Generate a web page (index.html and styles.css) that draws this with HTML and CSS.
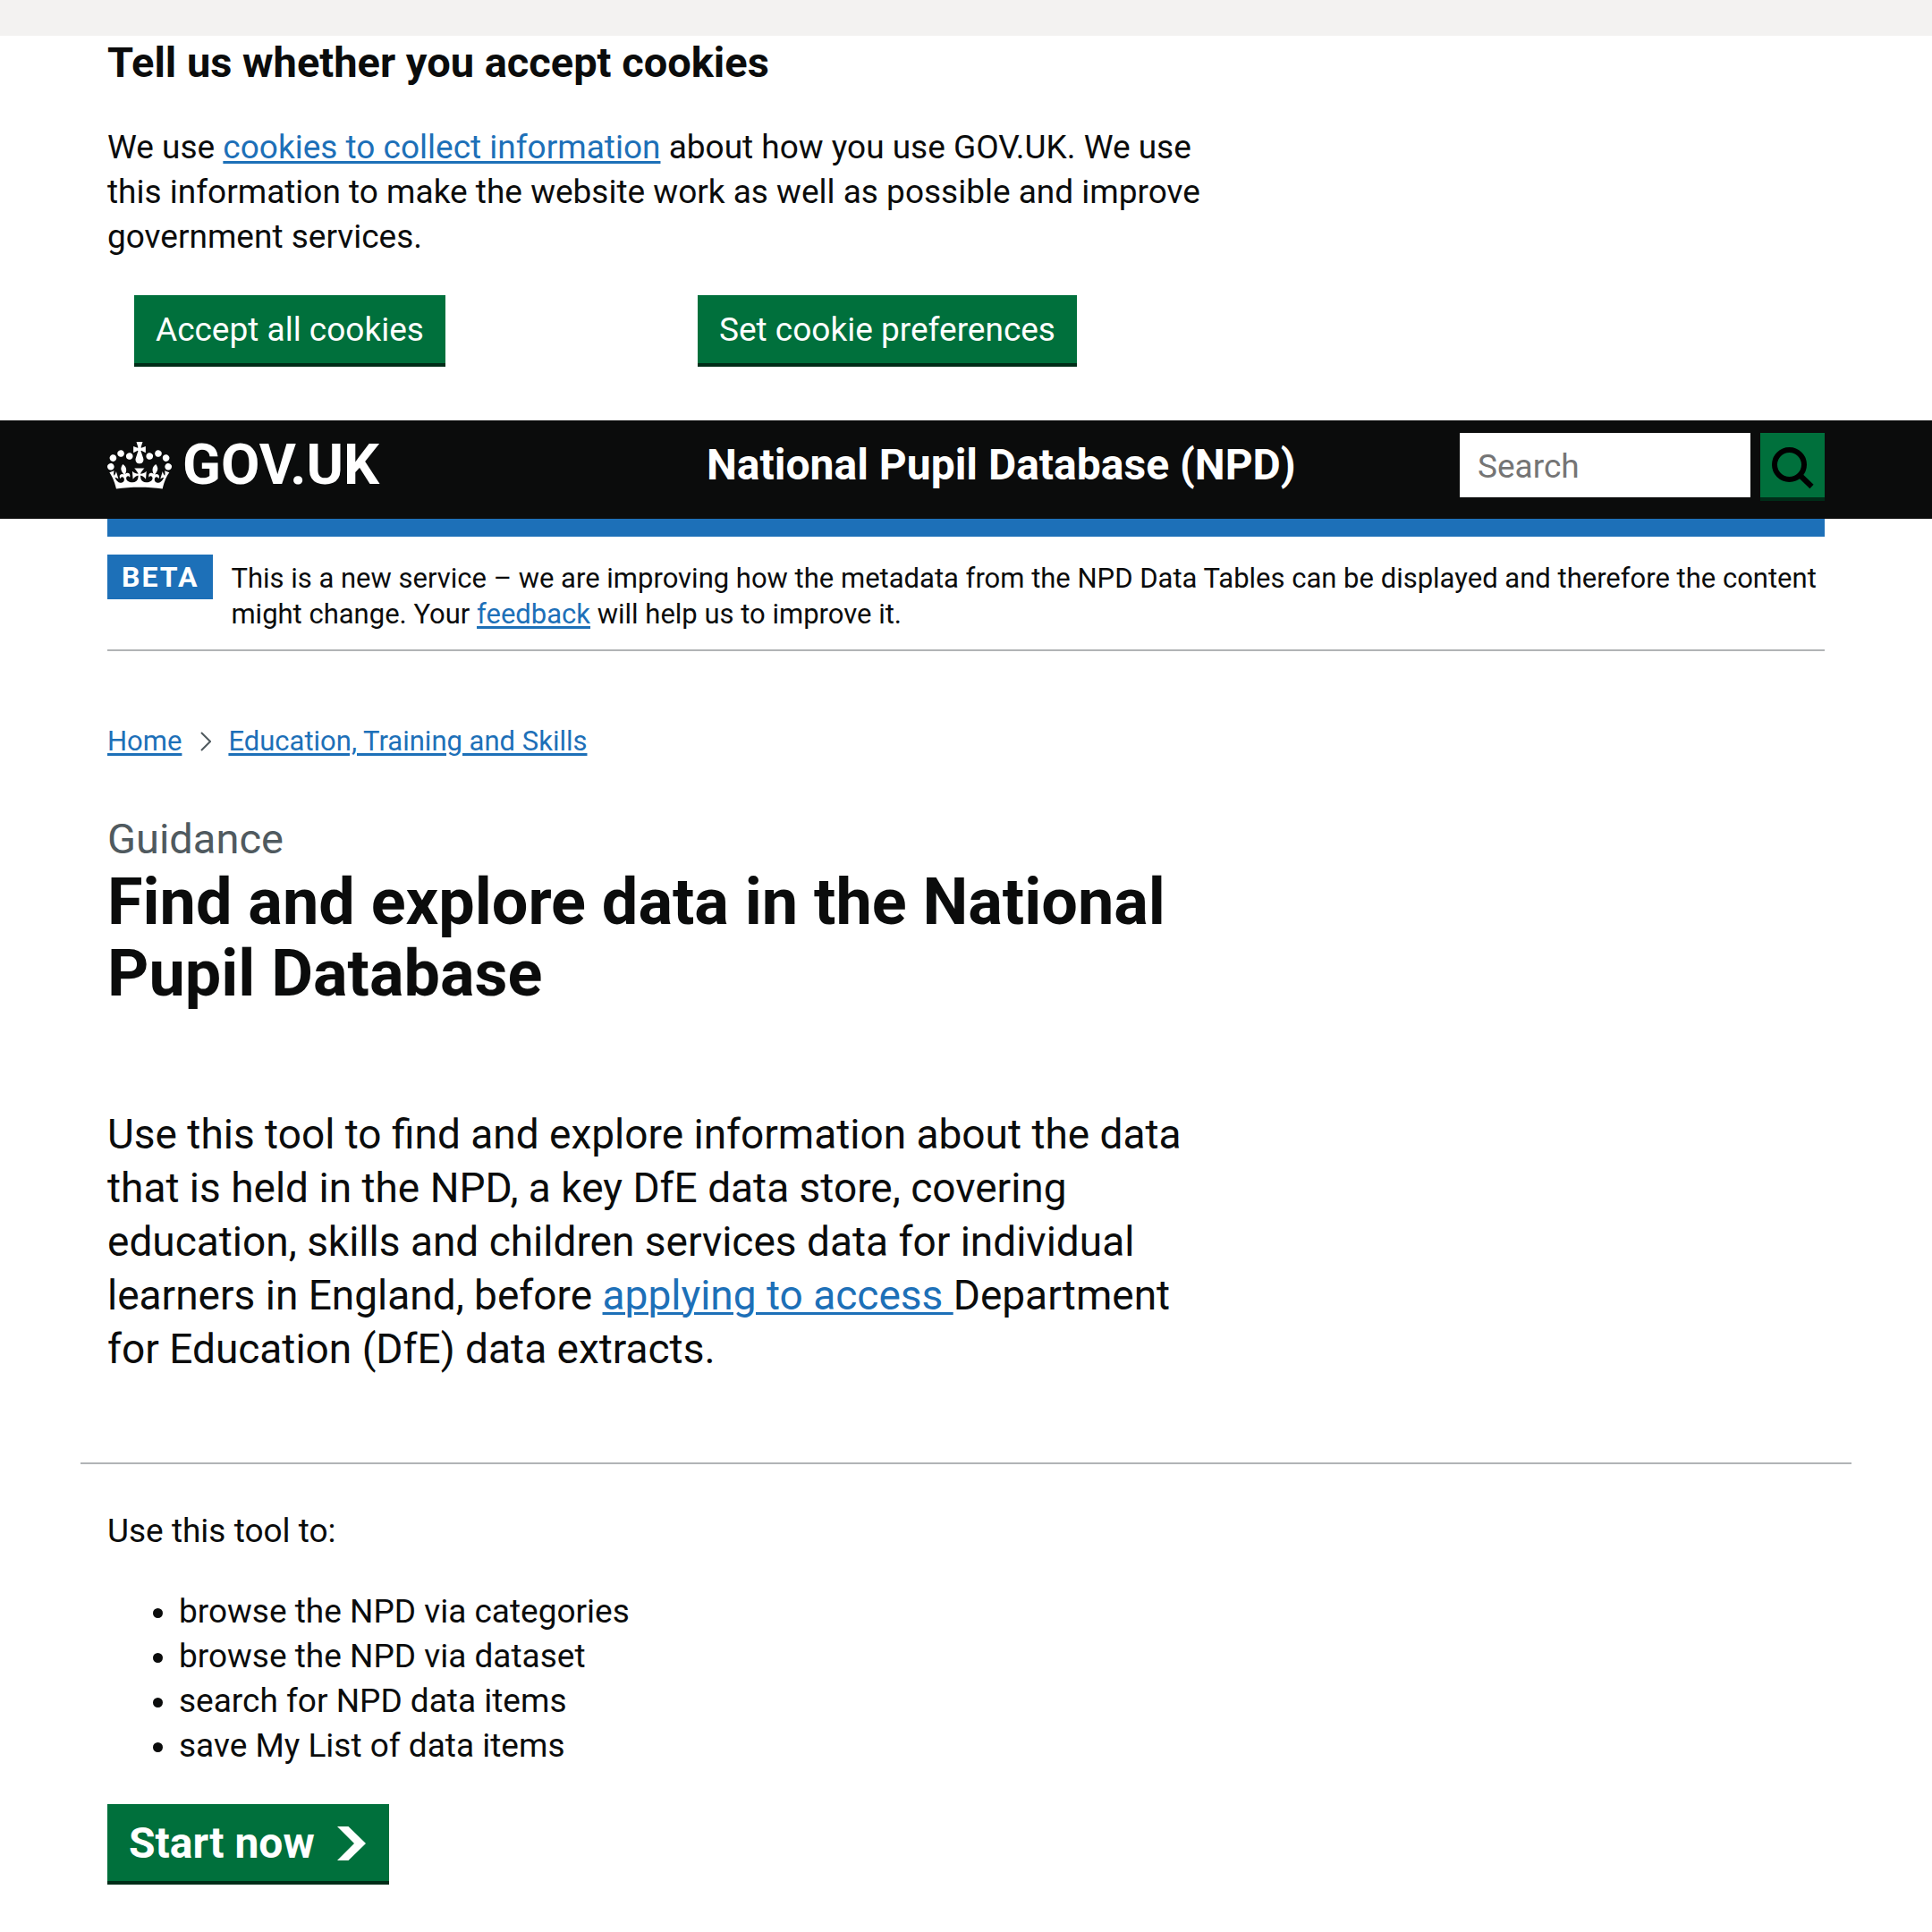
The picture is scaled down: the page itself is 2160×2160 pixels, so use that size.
FILE: index.html
```html
<!DOCTYPE html>
<html lang="en">
<head>
<meta charset="utf-8">
<meta name="viewport" content="width=device-width, initial-scale=1">
<title>Find and explore data in the National Pupil Database</title>
<link rel="stylesheet" href="styles.css">
</head>
<body>
<div class="top-strip"></div>

<section class="container cookie-banner" aria-label="Cookies">
  <div class="columns">
    <div class="two-thirds">
      <h2 class="heading-m">Tell us whether you accept cookies</h2>
      <p class="body">We use <a class="link" href="#cookies">cookies to collect information</a> about how you use GOV.UK. We use this information to make the website work as well as possible and improve government services.</p>
      <div class="cookie-actions">
        <div class="cookie-action"><button class="button" type="button">Accept all cookies</button></div>
        <div class="cookie-action"><button class="button" type="button">Set cookie preferences</button></div>
      </div>
    </div>
  </div>
</section>

<header class="header">
  <div class="container columns header-row">
    <a class="logo" href="#home">
      <svg class="crown" viewBox="0 0 132 97" aria-hidden="true"><path fill="currentColor" fill-rule="evenodd" d="M25 30.2c3.5 1.5 7.7-.2 9.1-3.7 1.5-3.6-.2-7.8-3.9-9.2-3.6-1.4-7.6.3-9.1 3.9-1.4 3.5.3 7.5 3.9 9zM9 39.5c3.6 1.5 7.8-.2 9.2-3.7 1.5-3.6-.2-7.8-3.9-9.1-3.6-1.5-7.6.2-9.1 3.8-1.4 3.5.3 7.5 3.8 9zM4.4 57.2c3.5 1.5 7.7-.2 9.1-3.8 1.5-3.6-.2-7.7-3.9-9.1-3.5-1.5-7.6.3-9.1 3.8-1.4 3.5.3 7.6 3.9 9.1zm38.3-21.4c3.5 1.5 7.7-.2 9.1-3.8 1.5-3.6-.2-7.7-3.9-9.1-3.6-1.5-7.6.3-9.1 3.8-1.3 3.6.4 7.7 3.9 9.1zm64.4-5.6c-3.6 1.5-7.8-.2-9.1-3.7-1.5-3.6.2-7.8 3.8-9.2 3.6-1.4 7.7.3 9.2 3.9 1.3 3.5-.4 7.5-3.9 9zm15.9 9.3c-3.6 1.5-7.7-.2-9.1-3.7-1.5-3.6.2-7.8 3.7-9.1 3.6-1.5 7.7.2 9.2 3.8 1.5 3.5-.3 7.5-3.8 9zm4.7 17.7c-3.6 1.5-7.8-.2-9.2-3.8-1.5-3.6.2-7.7 3.9-9.1 3.6-1.5 7.7.3 9.2 3.8 1.3 3.5-.4 7.6-3.9 9.1zM89.3 35.8c-3.6 1.5-7.8-.2-9.2-3.8-1.4-3.6.2-7.7 3.9-9.1 3.6-1.5 7.7.3 9.2 3.8 1.4 3.6-.3 7.7-3.9 9.1zM69.7 17.7l8.9 4.7V9.3l-8.9 2.8c-.2-.3-.5-.6-.9-.9L72.4 0H59.6l3.5 11.2c-.3.3-.6.5-.9.9l-8.8-2.8v13.1l8.8-4.7c.3.3.6.7.9.9l-5 15.4v.1c-.2.8-.4 1.6-.4 2.4 0 4.1 3.1 7.5 7 8.1h.2c.3 0 .7.1 1 .1.4 0 .7 0 1-.1h.2c4-.6 7.1-4.1 7.1-8.1 0-.8-.1-1.7-.4-2.4V34l-5.1-15.4c.4-.2.7-.6 1-.9zM66 92.8c16.9 0 32.8 1.1 47.1 3.2 4-16.9 8.9-26.7 14-33.5l-9.6-3.4c1 4.9 1.1 7.2 0 10.2-1.5-1.4-3-4.3-4.2-8.7L108.6 76c2.8-2 5-3.2 7.5-3.3-4.4 9.4-10 11.9-13.6 11.2-4.3-.8-6.3-4.6-5.6-7.9 1-4.7 5.7-5.9 8-.5 4.3-8.7-3-11.4-7.6-8.8 7.1-7.2 7.9-13.5 2.1-21.1-8 6.1-8.1 12.3-4.5 20.8-4.7-5.4-12.1-2.5-9.5 6.2 3.4-5.2 7.9-2 7.2 3.1-.6 4.3-6.4 7.8-13.5 7.2-10.3-.9-10.9-8-11.2-13.8 2.5-.5 7.1 1.8 11 7.3L80.2 60c-4.1 4.4-8 5.3-12.3 5.4 1.4-4.4 8-11.6 8-11.6H55.5s6.4 7.2 7.9 11.6c-4.2-.1-8-1-12.3-5.4l1.4 16.4c3.9-5.5 8.5-7.7 10.9-7.3-.3 5.8-.9 12.8-11.1 13.8-7.2.6-12.9-2.9-13.5-7.2-.7-5 3.8-8.3 7.1-3.1 2.7-8.7-4.6-11.6-9.4-6.2 3.7-8.5 3.6-14.7-4.6-20.8-5.8 7.6-5 13.9 2.2 21.1-4.7-2.6-11.9.1-7.7 8.8 2.3-5.5 7.1-4.2 8.1.5.7 3.3-1.3 7.1-5.7 7.9-3.5.7-9-1.8-13.5-11.2 2.5.1 4.7 1.3 7.5 3.3l-4.7-15.4c-1.2 4.4-2.7 7.2-4.3 8.7-1.1-3-.9-5.3 0-10.2l-9.5 3.4c5 6.9 9.9 16.7 14 33.5 14.8-2.1 30.8-3.2 47.7-3.2z"/></svg>
      <span class="logo-text">GOV.UK</span>
    </a>
    <div class="header-content">
      <a class="service-name" href="#service">National Pupil Database (NPD)</a>
      <form class="search" role="search">
        <input class="search-input" type="search" placeholder="Search" aria-label="Search">
        <button class="search-button" type="button" aria-label="Search">
          <svg class="search-icon" viewBox="0 0 72 72" aria-hidden="true"><circle cx="32.500" cy="35.500" r="16.500" fill="none" stroke="#000" stroke-width="6"/><path d="M44 47 57.500 60" fill="none" stroke="#000" stroke-width="6"/></svg>
        </button>
      </form>
    </div>
  </div>
</header>

<div class="container">
  <div class="header-bar"></div>
  <div class="phase-banner">
    <strong class="tag">BETA</strong>
    <p class="phase-text">This is a new service – we are improving how the metadata from the NPD Data Tables can be displayed and therefore the content might change. Your <a class="link" href="#feedback">feedback</a> will help us to improve it.</p>
  </div>

  <nav aria-label="Breadcrumb">
    <ol class="breadcrumbs">
      <li><a class="link" href="#home">Home</a></li>
      <li class="crumb"><svg class="chevron" viewBox="0 0 12 22" aria-hidden="true"><path d="M1 1 11 11 1 21" fill="none" stroke="#505a5f" stroke-width="2"/></svg><a class="link" href="#education">Education, Training and Skills</a></li>
    </ol>
  </nav>

  <main>
    <div class="columns">
      <div class="two-thirds">
        <span class="caption">Guidance</span>
        <h1 class="heading-xl">Find and explore data in the National Pupil Database</h1>
        <p class="lead">Use this tool to find and explore information about the data that is held in the NPD, a key DfE data store, covering education, skills and children services data for individual learners in England, before <a class="link" href="#apply">applying to access </a>Department for Education (DfE) data extracts.</p>
      </div>
    </div>
    <hr class="rule">
    <p class="body">Use this tool to:</p>
    <ul class="list">
      <li>browse the NPD via categories</li>
      <li>browse the NPD via dataset</li>
      <li>search for NPD data items</li>
      <li>save My List of data items</li>
    </ul>
    <button class="button button-start" type="button">Start now
      <svg class="start-arrow" viewBox="0 0 32 38" aria-hidden="true"><path fill="currentColor" d="M0 0h12.500L32 19 12.500 38H0l19-19z"/></svg>
    </button>
  </main>
</div>
</body>
</html>
```

FILE: styles.css
```css
*, *::before, *::after { box-sizing: border-box; }

body {
  margin: 0;
  background: #fff;
  color: #0b0c0c;
  font-family: Roboto, "Liberation Sans", sans-serif;
  font-size: 37px;
  line-height: 50px;
}

h1, h2, p, ul, ol { margin: 0; }
button, input { font: inherit; }

.top-strip { height: 40px; background: #f3f2f1; }

.container { max-width: 1920px; margin: 0 auto; }

.columns {
  display: grid;
  grid-template-columns: repeat(3, minmax(0, 1fr));
  column-gap: 60px;
}
.two-thirds { grid-column: span 2; }

.link {
  color: #1d70b8;
  text-decoration: underline;
  text-decoration-thickness: 3px;
  text-underline-offset: 3px;
}

.heading-m { margin-bottom: 40px; font-size: 47px; line-height: 60px; }

.cookie-banner { padding-bottom: 60px; }
.cookie-actions {
  display: grid;
  grid-template-columns: 1fr 1fr;
  margin-top: 40px;
}
.cookie-action { padding-left: 30px; }

.button {
  display: inline-flex;
  align-items: center;
  margin: 0 0 4px;
  padding: 14px 24px 12px;
  border: 0;
  border-radius: 0;
  background: #00703c;
  box-shadow: 0 4px 0 #002d18;
  color: #fff;
}

.header { background: #0b0c0c; color: #fff; }
.header-row { align-items: center; height: 110px; }
.logo {
  display: flex;
  align-items: center;
  gap: 12px;
  padding-bottom: 10px;
  color: inherit;
  text-decoration: none;
}
.crown { width: 72px; height: 53px; }
.logo-text { font-size: 63px; line-height: 60px; font-weight: 700; }
.header-content {
  grid-column: span 2;
  display: flex;
  justify-content: space-between;
  align-items: center;
  padding: 0 0 10px 10px;
}
.service-name { color: inherit; font-size: 48px; font-weight: 700; text-decoration: none; }
.search { display: flex; gap: 11px; }
.search-input {
  width: 325px;
  height: 72px;
  padding: 2px 20px 0;
  border: 0;
  border-radius: 0;
  background: #fff;
  appearance: none;
}
.search-input::placeholder { color: #757575; opacity: 1; }
.search-button {
  width: 72px;
  height: 72px;
  padding: 0;
  border: 0;
  background: #00703c;
  box-shadow: 0 4px 0 #002d18;
}
.search-icon { display: block; }

.header-bar { height: 20px; background: #1d70b8; }

.phase-banner {
  display: flex;
  align-items: flex-start;
  gap: 20px;
  padding: 20px 0 19px;
  border-bottom: 2px solid #b1b4b6;
}
.tag {
  flex: none;
  padding: 0 16px;
  background: #1d70b8;
  color: #fff;
  font-size: 32px;
  letter-spacing: 2px;
}
.phase-text { padding-top: 7px; font-size: 31px; line-height: 40px; }

.breadcrumbs {
  display: flex;
  gap: 21px;
  margin-top: 81px;
  padding: 0;
  list-style: none;
  font-size: 31px;
  line-height: 40px;
}
.crumb { display: flex; align-items: center; gap: 19px; }
.chevron { width: 12px; height: 22px; }

.caption {
  display: block;
  margin-top: 59px;
  color: #505a5f;
  font-size: 47px;
  line-height: 60px;
}
.heading-xl { margin-top: 1px; font-size: 72px; line-height: 80px; }
.lead { margin-top: 109px; padding-right: 30px; font-size: 46px; line-height: 60px; }

.rule {
  margin: 97px -30px 50px;
  border: 0;
  border-top: 2px solid #b1b4b6;
}

.list { margin: 40px 0; padding-left: 80px; }

.button-start {
  gap: 25px;
  padding-right: 26px;
  font-size: 48px;
  line-height: 60px;
  font-weight: 700;
}
.start-arrow { width: 32px; height: 38px; }
```
